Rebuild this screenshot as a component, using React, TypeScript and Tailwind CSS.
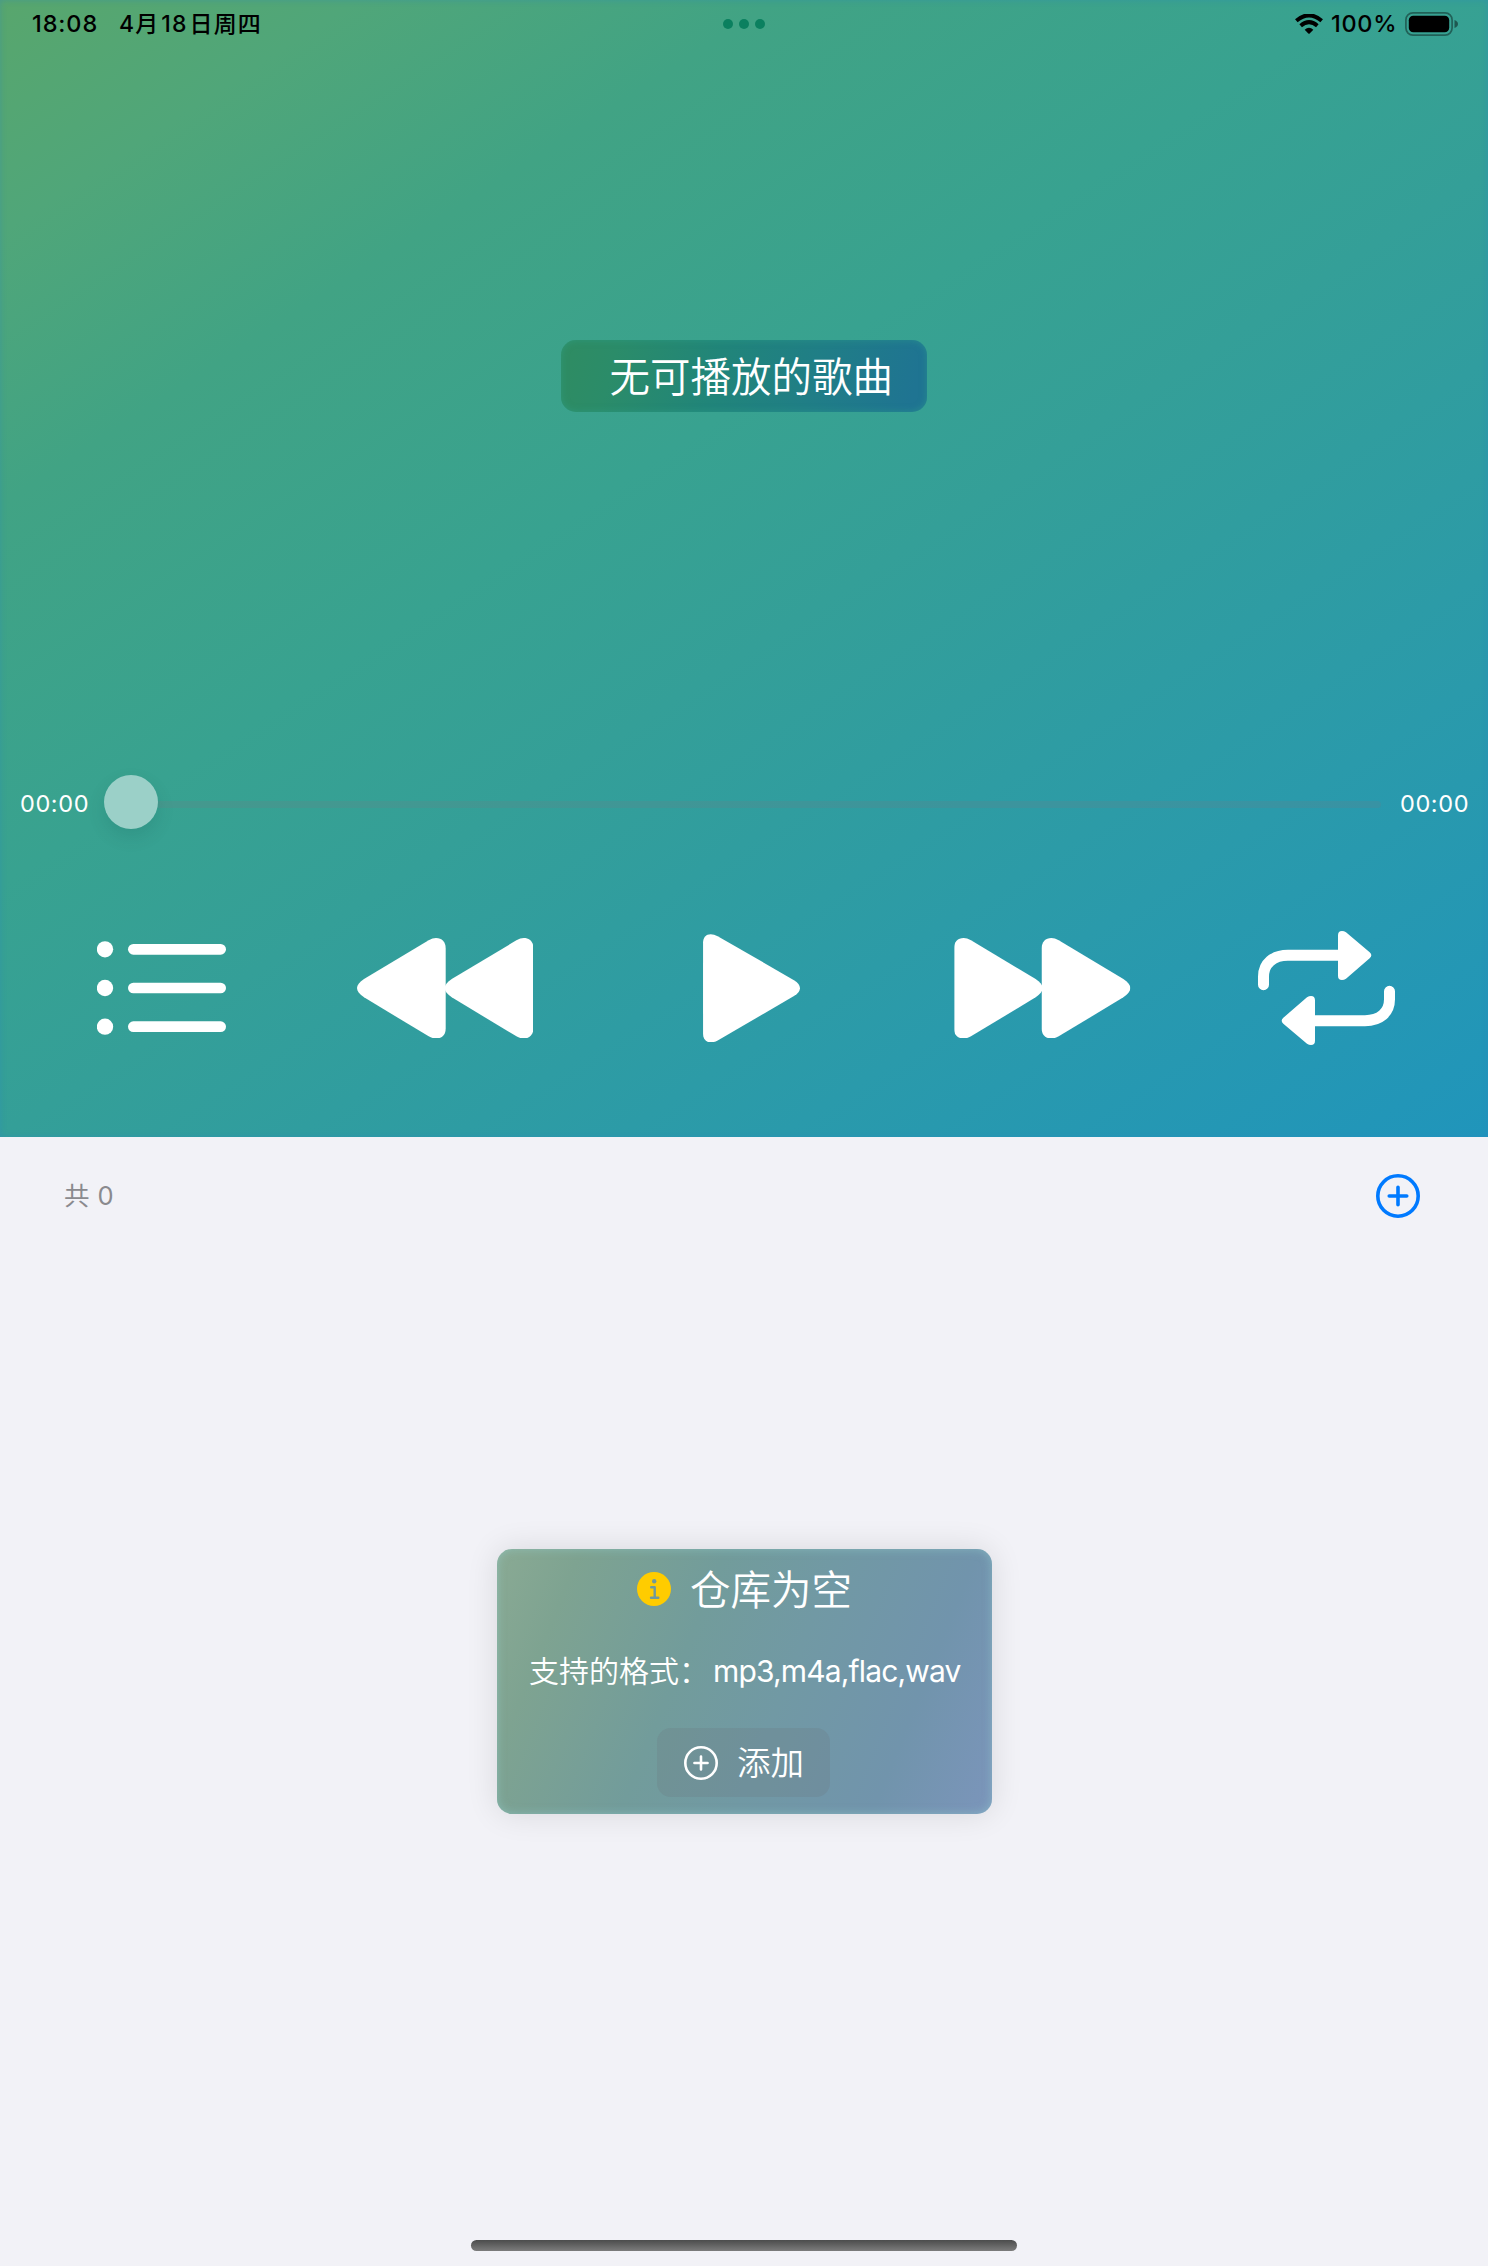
import React from "react";

function Wifi() {
  return (
    <svg width="28" height="20" viewBox="0 0 84 60" className="block">
      <path d="M4 20 Q42 -12 80 20" fill="none" stroke="#000" strokeWidth="12" />
      <path d="M17 35 Q42 14 67 35" fill="none" stroke="#000" strokeWidth="12" />
      <path d="M29 47 Q42 36 55 47 L44 58.500 Q42 60 40 58.500 Z" />
    </svg>
  );
}

function Battery() {
  return (
    <svg width="54" height="24" viewBox="0 0 54 24" className="block">
      <rect x="0.9" y="0.9" width="46.200" height="22.200" rx="7" fill="none" stroke="#000" strokeOpacity="0.4" strokeWidth="1.700" />
      <rect x="3.800" y="3.800" width="40.400" height="16.400" rx="4.500" />
      <path d="M49.500 8 Q53 9.500 53 12 Q53 14.500 49.500 16 Z" fillOpacity="0.45" />
    </svg>
  );
}

function ListIcon() {
  return (
    <svg width="129" height="94" viewBox="111 122 387 282" className="block" fill="#fff">
      {[147, 263, 379].map((y) => (
        <g key={y}>
          <circle cx="135" cy={y} r="24.500" />
          <rect x="204" y={y - 16} width="294" height="32" rx="16" />
        </g>
      ))}
    </svg>
  );
}

const SEEK =
  "M891 264 C891 255 899 246 912 237 L1106 121 Q1118 114 1128 114 C1146 114 1157 126 1157 144 V386 C1157 404 1146 415.500 1128 415.500 Q1118 415.500 1106 409 L912 292 C899 283 891 274 891 264Z";

function SeekIcon() {
  return (
    <svg width="176.400" height="100.700" viewBox="891 114 529.200 302" className="block" fill="#fff">
      <path d={SEEK} />
      <path d={SEEK} transform="translate(263.200 0)" />
    </svg>
  );
}

function PlayIcon() {
  return (
    <svg width="97" height="108.600" viewBox="129 101.500 291 326" className="block" fill="#fff">
      <path d="M129 128 C129 112 138 102 152 102 Q162 102 173 108 L402 240 Q420 251 420 264 Q420 277 402 288 L173 421 Q162 427 152 427 C138 427 129 417 129 401Z" />
    </svg>
  );
}

function RepeatHalf({ transform }: { transform?: string }) {
  return (
    <g transform={transform}>
      <path d="M130.500 254 V230 C130.500 190 160 166 204 166 H360" fill="none" stroke="#fff" strokeWidth="33" strokeLinecap="round" />
      <path
        d="M354 106 C354 97 358 93 366 93 Q372 93 378 97 L449 157 Q454 161 454 166 Q454 171 449 175 L378 236 Q372 240 366 240 C358 240 354 236 354 227Z"
        fill="#fff"
      />
    </g>
  );
}

function RepeatIcon() {
  return (
    <svg width="137" height="114" viewBox="114 93 411 342" className="block">
      <RepeatHalf />
      <RepeatHalf transform="rotate(180 319.500 264)" />
    </svg>
  );
}

function PlusCircle({ size, stroke }: { size: number; stroke: number }) {
  const c = size / 2;
  const arm = size * 0.222 - 1;
  return (
    <svg width={size} height={size} viewBox={`0 0 ${size} ${size}`} className="block" fill="none" stroke="currentColor" strokeWidth={stroke} strokeLinecap="round">
      <circle cx={c} cy={c} r={c - stroke / 2} />
      <path d={`M${c - arm} ${c}H${c + arm}M${c} ${c - arm}V${c + arm}`} />
    </svg>
  );
}

function InfoIcon() {
  return (
    <svg width="34" height="34" viewBox="0 0 34 34" className="block">
      <circle cx="17" cy="17" r="17" fill="#ffcc00" />
      <path d="M14.200 15.200H17.700V25.800M14 25.800H21.300" fill="none" stroke="#71999a" strokeWidth="2.400" strokeLinecap="round" strokeLinejoin="round" />
      <circle cx="17.200" cy="9.300" r="2.200" fill="#71999a" />
    </svg>
  );
}

export default function App() {
  return (
    <div className="relative flex h-[2266px] w-[1488px] flex-col overflow-hidden bg-[#f2f2f7] font-['Inter','Noto_Sans_CJK_SC',sans-serif] whitespace-nowrap">
      <section className="flex h-[1137px] flex-col bg-[linear-gradient(147deg,#58a66d_0%,#50a679_11%,#41a384_24%,#38a290_42%,#349f98_54%,#309d9f_63%,#2a9aab_78%,#2095bb_100%)] shadow-[inset_0_0_6px_rgba(40,130,200,0.35)]">
        <header className="flex h-12 items-center text-black">
          <div className="ml-[32px] w-[70px] text-[23.500px] font-medium tracking-[0.9px]">18:08</div>
          <div className="ml-[17px] w-[460px] text-[23px] font-medium tracking-[1.100px]">
            4<span className="mr-[2px] font-[450]">月</span>18<span className="ml-[2px] font-[450]">日周四</span>
          </div>
          <div className="ml-[144px] flex gap-[6px]">
            <i className="size-[10px] rounded-full bg-[#0b805f]" />
            <i className="size-[10px] rounded-full bg-[#0b805f]" />
            <i className="size-[10px] rounded-full bg-[#0b805f]" />
          </div>
          <div className="ml-auto">
            <Wifi />
          </div>
          <div className="ml-2 w-[65px] text-[23.500px] font-medium tracking-[0.7px]">100%</div>
          <div className="mr-[29px] ml-[9px]">
            <Battery />
          </div>
        </header>

        <div className="mt-[292px] ml-[561px] flex h-[72px] w-[366px] items-center justify-end rounded-[15px] bg-[linear-gradient(105deg,#2f8c62_0%,#2b8c69_15%,#218579_42%,#207e86_68%,#1f7492_95%)] pt-[4px] pr-[34px] text-[40.500px] font-[350] text-white shadow-[inset_0_0_7px_rgba(45,160,140,0.55)]">
          无可播放的歌曲
        </div>

        <div className="mt-[363px] flex h-[54px] items-center text-[23.500px] tracking-[0.6px] text-white">
          <span className="ml-5 w-[67px] pt-[4px] font-[370]">00:00</span>
          <div className="ml-[17px] flex flex-1 items-center">
            <div className="size-[54px] rounded-full bg-[#9bd0c8] shadow-[0_8px_18px_rgba(0,60,60,0.12)]" />
            <div className="mt-[4px] h-[7px] flex-1 rounded-r-full bg-[#787880]/20" />
          </div>
          <span className="mr-[20px] ml-[19px] w-[68px] pt-[4px] font-[370]">00:00</span>
        </div>

        <div className="mt-[102px] flex h-[114px] items-center">
          <button className="ml-[97px]">
            <ListIcon />
          </button>
          <button className="ml-[131px]">
            <SeekIcon />
          </button>
          <button className="ml-[169.600px]">
            <PlayIcon />
          </button>
          <button className="ml-[154px] -scale-x-100">
            <SeekIcon />
          </button>
          <button className="ml-[127.600px]">
            <RepeatIcon />
          </button>
        </div>
      </section>

      <section className="flex h-[118px] items-center justify-between pr-[68px] pl-16">
        <span className="pt-px text-[25.500px] font-normal tracking-[0.4px] text-[#8a8a8e]">共 0</span>
        <button className="text-[#007aff]">
          <PlusCircle size={44} stroke={3.6} />
        </button>
      </section>

      <section className="mt-[294px] ml-[497px] flex h-[265px] w-[495px] flex-col items-center rounded-[15px] bg-[linear-gradient(112deg,#8aaa94_0%,#7ea391_14%,#729c9b_38%,#7199a4_57%,#7194ac_80%,#7b95bb_100%)] font-[350] text-white shadow-[0_0_32px_rgba(0,0,0,0.11),inset_0_0_10px_rgba(145,205,205,0.55)]">
        <div className="mt-[11px] flex h-[58px] w-full items-center pl-[140px]">
          <InfoIcon />
          <span className="ml-[19px] pt-[4px] text-[40.500px]">仓库为空</span>
        </div>
        <div className="mt-[33px] flex h-10 w-full items-center pl-8 text-[30px]">
          支持的格式：<span className="ml-[4px] font-normal tracking-[-0.85px]">mp3,m4a,flac,wav</span>
        </div>
        <button className="mt-[37px] mr-[2px] flex h-[69px] w-[173px] items-center rounded-[14px] bg-[#6c7880]/25 pl-[27px]">
          <PlusCircle size={34} stroke={2.6} />
          <span className="ml-[19px] pt-[2px] text-[33.500px]">添加</span>
        </button>
      </section>

      <div className="mt-auto mb-[15px] ml-[471px] h-[11px] w-[546px] rounded-full bg-[linear-gradient(to_bottom,#4b4c4c,#7c7c7c)]" />
    </div>
  );
}
